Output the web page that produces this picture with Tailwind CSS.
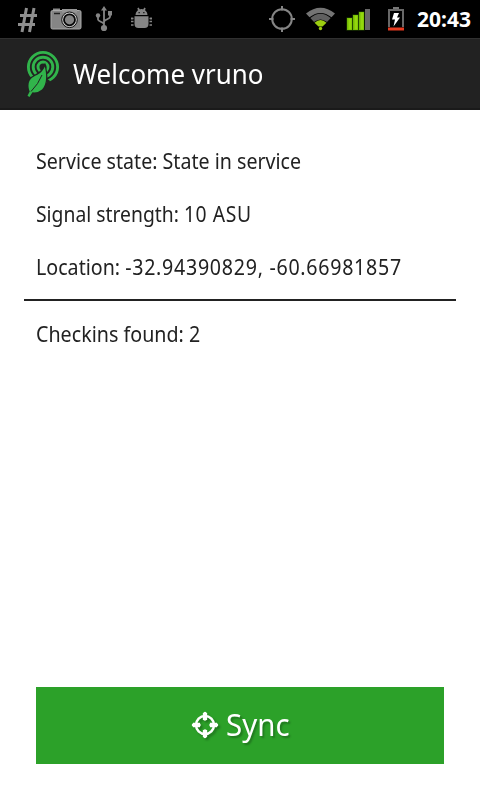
<!DOCTYPE html>
<html lang="en">
<head>
<meta charset="utf-8">
<title>Welcome</title>
<script src="https://cdn.jsdelivr.net/npm/@tailwindcss/browser@4"></script>
</head>
<body class="w-[480px] h-[800px] overflow-hidden bg-white font-['Noto_Sans',sans-serif] text-[#222] flex flex-col">
<div class="h-[38px] shrink-0 bg-black flex items-center">
<svg class="w-[408px] h-[38px] shrink-0" viewBox="0 0 408 38" fill="none">
<g stroke="#8e8e8e" stroke-width="3"><path d="M26.500 8L22 32M34 8L29.500 32M20 15.500H37M18 24.500H35"/></g>
<g><path d="M53 8.500h7v2h-7z" fill="#8b8b8b"/><rect x="51" y="10.500" width="30" height="18.500" rx="1.500" fill="#858585" stroke="#aaa"/><path d="M62 9h15v3.500H62z" fill="#969696"/><path d="M54 13.500h6" stroke="#222" stroke-width="1.500"/><circle cx="69.500" cy="19.800" r="7.800" fill="#d0d0d0" stroke="#111" stroke-width="1"/><circle cx="69.500" cy="19.800" r="5.500" fill="#858585" stroke="#080808" stroke-width="1.800"/></g>
<g stroke="#858585" stroke-width="1.800"><path d="M104 10v18M98 17v2.500c0 2 6 2.500 6 5M110 14v3c0 2-6 2.500-6 5"/><path d="M104 6l3 4.500h-6z" fill="#858585" stroke="none"/><circle cx="104" cy="28" r="3.100" fill="#858585" stroke="none"/><circle cx="98" cy="15.500" r="2.200" fill="#858585" stroke="none"/><path d="M108 11h4v4.500h-4z" fill="#858585" stroke="none"/></g>
<g fill="#858585"><path d="M135.500 15a6 6 0 0 1 12 0zM134.500 16.300h14V24q0 4-4 4h-6q-4 0-4-4z"/><path d="M138 8l1.500 3M145 8l-1.500 3M133.500 18.500H131M133.500 21.500H131M133.500 25H131M149.500 18.500h2.500M149.500 21.500h2.500M149.500 25h2.500M132 17.500v2M151 17.500v2" stroke="#858585" stroke-width="1.700"/><path d="M138.500 12h1.300v1.300h-1.300zM143.200 12h1.300v1.300h-1.300z" fill="#111"/></g>
<g stroke="#858585" stroke-width="2"><circle cx="282" cy="19" r="9.800"/><path d="M282 6v4.500M282 27.500V32M269 19h4.500M290.500 19h4.500"/></g>
<g><path d="M306 13.500Q320.500 2 335 13.500L331.500 17.300Q320.500 8.500 309.500 17.300z" fill="#747474"/><path d="M310.300 18Q320.500 9.500 330.700 18L327 22Q320.500 16.800 314 22z" fill="#606060"/><path d="M314.500 22.700Q320.500 17.500 326.500 22.700L322.500 26.600H318.500z" fill="#9cce10"/><circle cx="320.500" cy="28.500" r="1.700" fill="#9cce10"/></g>
<g fill="#74bb05"><path d="M346.500 17.500h6V30.500h-6zM352.500 14.500h6V30.500h-6zM358.500 11.500h6V30.500h-6z" fill="#234700"/><path d="M347 18h5v12h-5zM353 15h5v15h-5zM359 12h5v18h-5z"/><path d="M348.500 18.500h3v11h-3zM354.500 15.500h3v14h-3zM360.500 12.500h3v17h-3z" fill="#94d80d"/><path d="M365 9h5v21h-5z" fill="#686868"/></g>
<g><path d="M393 7h6v2.500h-6z" fill="#777"/><path d="M389 27V10h14v17" stroke="#686868" stroke-width="2"/><path d="M388 27.500h16v3h-16z" fill="#e73b20"/><path d="M394 13h5l-2 4.500h3l-6.500 9 1.500-7h-3z" fill="#fff"/></g>
</svg>
<span class="ml-[9px] text-[21px] leading-[38px] font-bold text-white whitespace-nowrap">20:43</span>
</div>
<header class="h-[72px] shrink-0 bg-[#222] border-t border-[#303030] border-b-2 border-b-[#1a1a1a] flex items-center">
<svg class="ml-[26px] w-[34px] h-[48px] shrink-0" viewBox="26 50 34 48" fill="none">
<g stroke="#31b44b" stroke-width="2.900"><circle cx="43" cy="67" r="14.600"/><circle cx="43" cy="67" r="9.800"/><circle cx="43" cy="67" r="5"/></g>
<path d="M44.800 66.500C46.500 73 47.500 84 42 89.500Q38 93 32.500 92.300L29.500 97L27.500 95.800L29.700 91.500C27.500 86 28 79.500 34 76.500C39 74 42.500 72 44.800 66.500z" fill="#31b44b" stroke="#222" stroke-width="2.500" paint-order="stroke"/>
<path d="M46.800 78.500V85H49L50 81z" fill="#222"/>
<path d="M31 91.500Q38.500 84 42 75" stroke="#222" stroke-width="1"/>
</svg>
<h1 class="ml-[13px] text-[28px] leading-[69px] text-white whitespace-nowrap inline-block origin-left scale-x-[.927]">Welcome vruno</h1>
</header>
<main class="flex-1 flex flex-col px-6 pt-6 pb-9">
<div class="px-3 text-[22px] leading-[53px] whitespace-nowrap">
<p><span class="inline-block origin-left scale-x-[.892]">Service state: State in service</span></p>
<p><span class="inline-block origin-left scale-x-[.878]">Signal strength: <span class="tracking-[.7px]">10 ASU</span></span></p>
<p><span class="inline-block origin-left scale-x-[.893]">Location: <span class="tracking-[.79px]">-32.94390829, -60.66981857</span></span></p>
</div>
<hr class="mt-[6px] border-0 h-[2px] bg-[#222]">
<p class="mt-[6px] px-3 text-[22px] leading-[53px]"><span class="inline-block origin-left scale-x-[.895]">Checkins found: 2</span></p>
<button class="mt-auto mx-3 h-[77px] bg-[#2ca129] text-white flex items-center [text-shadow:2px_2px_2px_#0004]">
<svg class="ml-[155px] w-[28px] h-[28px] relative -top-px drop-shadow-[2px_2px_1px_#0004]" viewBox="0 0 28 28" fill="none" stroke="#fff"><circle cx="14" cy="14" r="9" stroke-width="2.500"/><path d="M14 2v7M14 19v7M2 14h7M19 14h7" stroke-width="4.300"/><path d="M14 2.500v5.500M14 20v5.500M2.500 14H8M20 14h5.500" stroke-width="3.500" stroke-linecap="round"/></svg>
<span class="ml-[7px] pb-0.5 text-[31px] leading-[75px] inline-block origin-left scale-x-[.95]">Sync</span>
</button>
</main>
</body>
</html>
